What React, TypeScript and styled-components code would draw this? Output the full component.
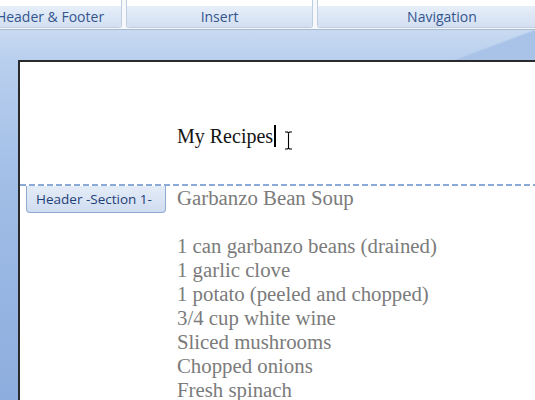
import React from "react";
import styled, { createGlobalStyle } from "styled-components";

const GlobalStyle = createGlobalStyle`
  * {
    box-sizing: border-box;
  }
  html,
  body {
    margin: 0;
    height: 100%;
    overflow: hidden;
    background: #8eaedf;
  }
`;

const Window = styled.div`
  width: 535px;
  height: 400px;
  display: flex;
  flex-direction: column;
  overflow: hidden;
`;

const Ribbon = styled.div`
  flex: 0 0 30px;
  display: flex;
  gap: 4px;
  background: #f6f8fb;
  border-bottom: 1px solid #a9b9cf;
  overflow: hidden;
`;

const Group = styled.div<{ $width: number; $shift?: number }>`
  flex: 0 0 ${(p) => p.$width}px;
  margin-left: ${(p) => p.$shift ?? 0}px;
  height: 28px;
  display: flex;
  flex-direction: column;
  background: #ffffff;
  border: 1px solid #bfcde0;
  border-top: none;
  border-radius: 0 0 3px 3px;
`;

const GroupLabel = styled.div`
  margin-top: auto;
  height: 21px;
  display: flex;
  align-items: center;
  justify-content: center;
  background: linear-gradient(#e6eef9, #d3dff1);
  border-radius: 0 0 3px 3px;
  font-family: "Open Sans", "DejaVu Sans", sans-serif;
  font-size: 14px;
  color: #34558e;
  white-space: nowrap;
`;

const Workspace = styled.div`
  flex: 1;
  display: flex;
  padding: 30px 0 0 18px;
  background:
    linear-gradient(to top left, #a8c2e8 0 48%, transparent 52%) no-repeat right top / 80px 30px,
    linear-gradient(180deg, #c8daf1 0, #b9cfee 30px, #a0bde6 160px, #8dadde 370px);
`;

const Page = styled.div`
  flex: 1;
  display: flex;
  flex-direction: column;
  background: #ffffff;
  border-left: 2px solid #2a2a2a;
  border-top: 2px solid #2a2a2a;
`;

const HeaderArea = styled.div`
  height: 122px;
  padding: 62px 0 0 157px;
`;

const Title = styled.span`
  position: relative;
  display: inline-block;
  font-family: "Liberation Serif", "DejaVu Serif", serif;
  font-size: 20px;
  line-height: 24px;
  color: #141414;
`;

const Caret = styled.span`
  display: inline-block;
  vertical-align: top;
  width: 2px;
  height: 22px;
  margin: 1px 0 0 1px;
  background: #000000;
`;

const Pointer = styled.svg`
  position: absolute;
  left: 107px;
  top: 7px;
`;

const Boundary = styled.div`
  position: relative;
  height: 2px;
  background: repeating-linear-gradient(90deg, #8caad8 0 6px, transparent 6px 9px);
`;

const SectionTab = styled.div`
  position: absolute;
  left: 6px;
  top: 2px;
  width: 140px;
  height: 27px;
  display: flex;
  align-items: center;
  padding-left: 9px;
  background: linear-gradient(#e4ecf7, #d0ddf0);
  border: 1px solid #8fabd3;
  border-top: none;
  border-radius: 0 0 4px 4px;
  font-family: "Open Sans", "DejaVu Sans", sans-serif;
  font-size: 13.5px;
  color: #1f3f78;
  white-space: nowrap;
`;

const Body = styled.div`
  padding-left: 157px;
  font-family: "Liberation Serif", "DejaVu Serif", serif;
  font-size: 20.8px;
  line-height: 24px;
  color: #7b7b7b;
`;

const Line = styled.p`
  margin: 0;
  min-height: 24px;
  white-space: nowrap;
`;

const lines = [
  "Garbanzo Bean Soup",
  "",
  "1 can garbanzo beans (drained)",
  "1 garlic clove",
  "1 potato (peeled and chopped)",
  "3/4 cup white wine",
  "Sliced mushrooms",
  "Chopped onions",
  "Fresh spinach",
];

export default function App() {
  return (
    <Window>
      <GlobalStyle />
      <Ribbon>
        <Group $width={144} $shift={-22}>
          <GroupLabel>Header &amp; Footer</GroupLabel>
        </Group>
        <Group $width={187}>
          <GroupLabel>Insert</GroupLabel>
        </Group>
        <Group $width={250}>
          <GroupLabel>Navigation</GroupLabel>
        </Group>
      </Ribbon>
      <Workspace>
        <Page>
          <HeaderArea>
            <Title>
              My Recipes
              <Caret />
              <Pointer width="9" height="19" viewBox="0 0 9 19">
                <path
                  d="M1 1h2.5l1 1 1-1H8M4.5 2v15M1 18h2.5l1-1 1 1H8"
                  fill="none"
                  stroke="#000"
                  strokeWidth="1.1"
                />
              </Pointer>
            </Title>
          </HeaderArea>
          <Boundary>
            <SectionTab>Header -Section 1-</SectionTab>
          </Boundary>
          <Body>
            {lines.map((text, i) => (
              <Line key={i}>{text}</Line>
            ))}
          </Body>
        </Page>
      </Workspace>
    </Window>
  );
}
